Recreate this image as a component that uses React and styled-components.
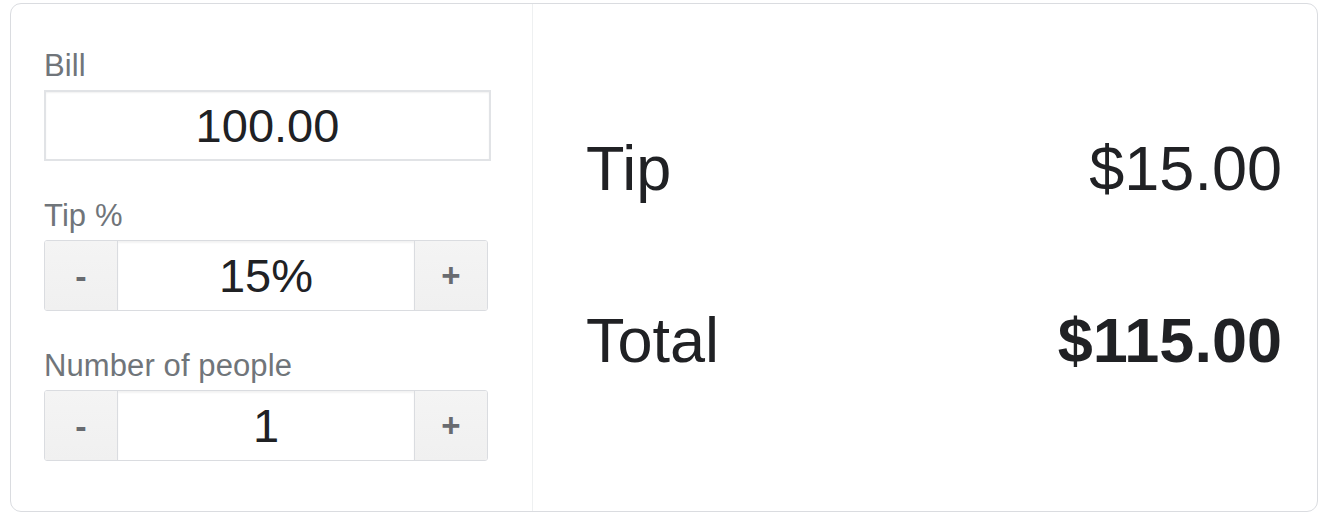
import React from "react";
import styled, { createGlobalStyle } from "styled-components";

const Global = createGlobalStyle`
  html, body { margin: 0; padding: 0; background: #ffffff; }
  body { font-family: "Liberation Sans", Arial, sans-serif; color: #202124; }
  * { box-sizing: border-box; }
`;

const Page = styled.div`
  padding: 3px 12px 0 10px;
`;

const Card = styled.div`
  display: flex;
  height: 509px;
  border: 1px solid #dadce0;
  border-radius: 11px;
  overflow: hidden;
`;

const Inputs = styled.div`
  width: 522px;
  flex: none;
  padding: 46px 0 0 33px;
  border-right: 1px solid #eef0f1;
  display: flex;
  flex-direction: column;
`;

const Field = styled.div`
  display: flex;
  flex-direction: column;
  margin-bottom: 39px;
  &:last-child { margin-bottom: 0; }
`;

const Label = styled.label`
  font-size: 31px;
  line-height: 32px;
  letter-spacing: 0.1px;
  color: #70757a;
  margin-bottom: 8px;
`;

const BillInput = styled.input`
  width: 447px;
  height: 71px;
  border: 2px solid #e1e3e6;
  border-radius: 0;
  box-shadow: inset 0 1px 2px rgba(0, 0, 0, 0.06);
  background: #fff;
  font-family: "Liberation Sans", Arial, sans-serif;
  font-size: 47px;
  color: #202124;
  text-align: center;
  padding: 0;
  outline: none;
`;

const Stepper = styled.div`
  width: 444px;
  height: 71px;
  display: flex;
  border: 1px solid #dadce0;
  border-radius: 3px;
  overflow: hidden;
`;

const StepButton = styled.button`
  width: 72px;
  flex: none;
  border: none;
  background: linear-gradient(#f4f4f4, #f0f0f0);
  color: #686b70;
  font-family: "Liberation Sans", Arial, sans-serif;
  font-weight: bold;
  font-size: ${(p) => (p.$minus ? "34px" : "33px")};
  line-height: 1;
  padding: 0;
  display: flex;
  align-items: center;
  justify-content: center;
  cursor: pointer;
`;

const StepValue = styled.input`
  flex: 1;
  min-width: 0;
  border: none;
  border-left: 1px solid #dadce0;
  border-right: 1px solid #dadce0;
  box-shadow: inset 0 2px 2px rgba(0, 0, 0, 0.05);
  background: #fff;
  font-family: "Liberation Sans", Arial, sans-serif;
  font-size: 47px;
  color: #202124;
  text-align: center;
  padding: 0;
  outline: none;
`;

const Results = styled.div`
  flex: 1;
  display: flex;
  flex-direction: column;
  justify-content: center;
  gap: 100px;
  padding: 0 35px 8px 53px;
`;

const ResultRow = styled.div`
  display: flex;
  justify-content: space-between;
  align-items: baseline;
  font-size: 63px;
  line-height: 72px;
  color: #202124;
`;

const Amount = styled.span`
  font-weight: ${(p) => (p.$bold ? "bold" : "normal")};
`;

function StepField({ label, value }) {
  return (
    <Field>
      <Label>{label}</Label>
      <Stepper>
        <StepButton $minus aria-label="decrease">-</StepButton>
        <StepValue defaultValue={value} readOnly />
        <StepButton aria-label="increase">+</StepButton>
      </Stepper>
    </Field>
  );
}

export default function App() {
  return (
    <Page>
      <Global />
      <Card>
        <Inputs>
          <Field>
            <Label>Bill</Label>
            <BillInput defaultValue="100.00" />
          </Field>
          <StepField label="Tip %" value="15%" />
          <StepField label="Number of people" value="1" />
        </Inputs>
        <Results>
          <ResultRow>
            <span>Tip</span>
            <Amount>$15.00</Amount>
          </ResultRow>
          <ResultRow>
            <span>Total</span>
            <Amount $bold>$115.00</Amount>
          </ResultRow>
        </Results>
      </Card>
    </Page>
  );
}
